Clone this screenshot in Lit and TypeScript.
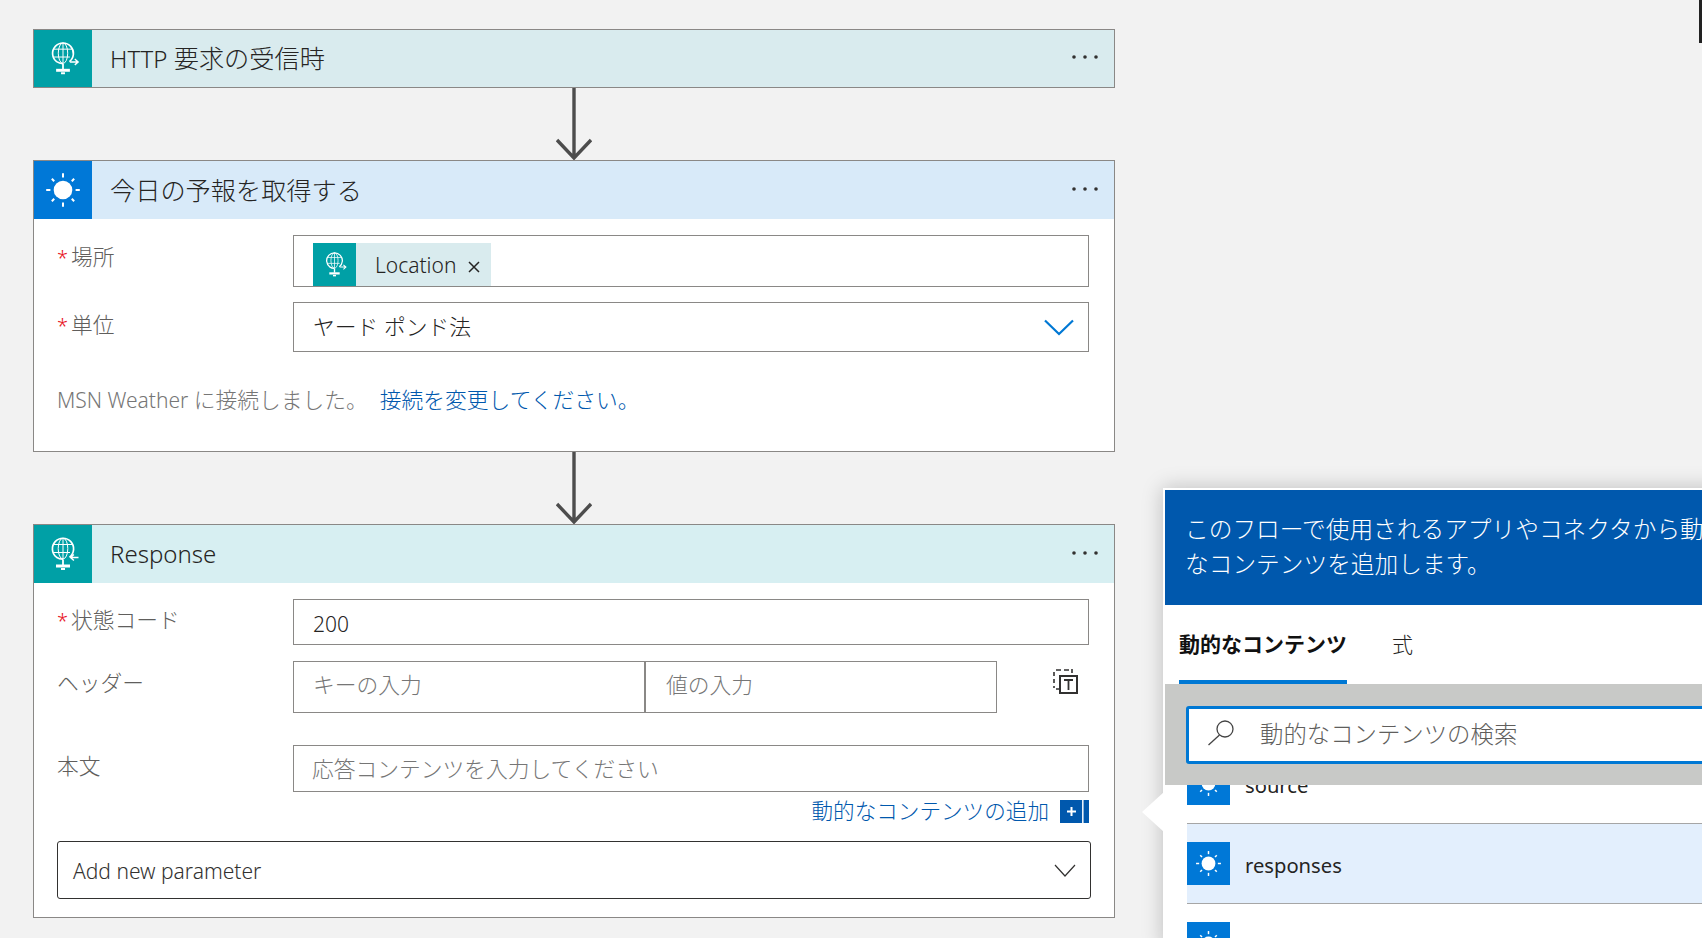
import { LitElement, html, css, svg } from "lit";
import { customElement } from "lit/decorators.js";

const globe = (dir: "out" | "in") => html`<svg viewBox="0 0 58 58" class="ic">
  <g fill="none" stroke="#fff" stroke-width="1">
    <path d="M35.5 32.2A10.6 10.6 0 1 0 22.5 32.2A10.6 10.6 0 0 0 29 34.2" stroke-width="1.7"/>
    <ellipse cx="29" cy="23.6" rx="4.8" ry="10.4"/>
    <path d="M29 13.2V34M19 19.5H39M19 27.5H36"/>
    <path d="M29 34.5V40" stroke-width="1.8"/>
    <path d="${dir === "out" ? "M36 32.5H44M41 29.5L44.4 32.5L41 35.5" : "M36.5 32.5H44.5M39.9 29.5L36.5 32.5L39.9 35.5"}" stroke-width="1.4"/>
  </g>
  <rect x="22" y="39.5" width="14" height="3" fill="#fff"/>
  <rect x="27" y="43" width="4" height="2" fill="#fff"/>
</svg>`;

const sun = () => html`<svg viewBox="0 0 58 58" class="ic">
  <circle cx="29" cy="29" r="9.3" fill="#fff"/>
  <g stroke="#fff" stroke-width="2" fill="none">
    ${[0, 45, 90, 135, 180, 225, 270, 315].map(
      (a) => svg`<path d="${a % 90 === 0 ? "M29 12.2V16.4" : "M29 13.2V16.6"}" transform="rotate(${a} 29 29)"/>`
    )}
  </g>
</svg>`;

const dots = () => html`<svg class="dots" width="26" height="6" viewBox="0 0 26 6">
  <circle cx="2" cy="3" r="1.8"/><circle cx="13" cy="3" r="1.8"/><circle cx="24" cy="3" r="1.8"/>
</svg>`;

const flowArrow = () => html`<div class="arrow"><svg width="36" height="72" viewBox="0 0 36 72" fill="none" stroke="#4d4d4d" stroke-width="3.4"><path d="M18 0V69M1 52L18 70L35 52"/></svg></div>`;

@customElement("app-root")
export class AppRoot extends LitElement {
  static styles = css`
    :host {
      display: block;
      position: relative;
      width: 1702px;
      height: 938px;
      overflow: hidden;
      background: #f2f2f2;
      font-family: "Noto Sans", "Noto Sans CJK JP", sans-serif;
      font-size: 21px;
      font-weight: 300;
      color: #252423;
      box-sizing: border-box;
      padding: 29px 0 0 33px;
    }
    * { box-sizing: border-box; }
    .ja { font-size: 21.75px; }
    .flow { width: 1082px; display: flex; flex-direction: column; }
    .card { border: 1px solid #8a8886; background: #fff; }
    .hdr { height: 58px; display: flex; align-items: center; padding-right: 16px; }
    .hdr.t1 { background: #d9ebee; height: 57px; }
    .hdr.t2 { background: #d8eaf9; }
    .hdr.t3 { background: #d7eff2; }
    .icbox { width: 58px; height: 100%; flex: none; display: flex; }
    .teal { background: #00a0a6; }
    .blue { background: #0078d7; }
    .ic { width: 100%; height: 100%; display: block; }
    .title { flex: 1; margin-left: 18px; font-size: 24px; line-height: 34px; }
    .title .tj { font-size: 25.2px; }
    .dots { fill: #323130; margin-top: -3px; }
    .arrow { height: 72px; display: flex; justify-content: center; }
    .arrow svg { display: block; margin-left: -1px; }
    .body { padding: 16px 25px 0 23px; }
    .row { display: grid; grid-template-columns: 236px 796px; }
    .lab { color: #605e5c; line-height: 28px; font-size: 21.75px; padding-top: 7px; white-space: nowrap; }
    .lab.down { padding-top: 8px; }
    .req::before { content: "*"; color: #e81123; font-size: 20px; margin-right: 3px; }
    .lab.lower { padding-top: 24px; }
    .field { border: 1px solid #8a8886; background: #fff; display: flex; align-items: center; padding-left: 19px; white-space: nowrap; font-size: 21px; }
    .ph { color: #767676; font-size: 21.75px; }
    .chip { height: 43px; margin-top: 7px; background: #d9ebee; display: flex; align-items: center; width: 178px; }
    .chip .icbox { width: 43px; }
    .chip span { margin-left: 19px; flex: 1; }
    .chip svg.x { margin: 5px 11px 0 0; }
    .chipfield { height: 52px; align-items: flex-start; }
    .sel { justify-content: space-between; height: 50px; margin-top: 15px; padding-right: 14px; font-size: 21.75px; }
    .sel span { padding-bottom: 3px; }
    .note { margin-top: 31px; height: 35px; line-height: 33px; color: #767676; display: flex; white-space: nowrap; }
    .note a { color: #0058ad; margin-left: 12px; font-size: 21.75px; }
    .spacer2 { height: 33px; }
    .f200 { height: 46px; padding-top: 3px; }
    .pair { display: flex; height: 52px; align-items: stretch; }
    .pair .field { width: 352px; flex: none; padding-left: 19px; padding-bottom: 8px; }
    .pair .field + .field { border-left: 1px solid #8a8886; padding-left: 20px; }
    .clip { margin: 8px 0 0 56px; flex: none; display: block; }
    .r2 { margin-top: 16px; }
    .r3 { margin-top: 32px; }
    .f3 { height: 47px; padding-left: 18px; padding-bottom: 2px; }
    .add { display: flex; justify-content: flex-end; align-items: center; height: 23px; margin-top: 8px; color: #0058ad; white-space: nowrap; line-height: 21px; font-size: 21.6px; }
    .add span { padding-bottom: 2px; }
    .plus { width: 29px; height: 23px; margin-left: 11px; display: block; }
    .param { margin: 18px -2px 18px 0; height: 58px; border: 1px solid #323130; border-radius: 3px; display: flex; align-items: center; justify-content: space-between; padding: 0 14px 0 15px; color: #323130; }
    .param span { padding-top: 2px; }
    .panel {
      position: absolute; left: 1163px; top: 488px; width: 620px; height: 460px;
      background: #fff; padding: 2px 0 0 2px;
      box-shadow: 0 0 20px rgba(0,0,0,.22);
    }
    .beak { position: absolute; left: -21px; top: 304px; display: block; }
    .banner { background: #0058ad; color: #fff; height: 115px; padding: 22px 20px 0 20px; font-size: 23.7px; line-height: 35px; white-space: nowrap; overflow: hidden; }
    .tabs { height: 79px; display: flex; padding: 0 0 0 14px; align-items: flex-start; }
    .tab { height: 79px; line-height: 79px; font-size: 21px; }
    .tab.on { font-weight: 700; color: #111; border-bottom: 4px solid #0078d4; width: 168px; white-space: nowrap; }
    .tab.off { margin-left: 45px; }
    .searchwrap { position: relative; z-index: 1; background: #c8c9c7; height: 101px; padding: 22px 0 0 21px; }
    .search { height: 58px; width: 640px; border: 3px solid #0078d4; border-radius: 3px; background: #fff; display: flex; align-items: center; color: #605e5c; font-size: 23.4px; padding: 0 0 5px 18px; }
    .search svg { margin-right: 25px; flex: none; }
    .list { margin: -41px 0 0 22px; width: 620px; }
    .item { height: 80px; display: flex; border-bottom: 1px solid #a6a6a6; padding-top: 18px; font-weight: 400; }
    .item.hl { background: #e3effd; }
    .item .icbox { width: 43px; height: 43px; }
    .item span { margin-left: 15px; line-height: 46px; color: #252423; font-size: 20.2px; }
    .corner { position: absolute; right: 0; top: 0; width: 3px; height: 43px; background: #222; }
  `;

  render() {
    return html`
      <div class="flow">
        <section class="card">
          <div class="hdr t1"><div class="icbox teal">${globe("out")}</div><div class="title">HTTP <span class="tj">要求の受信時</span></div>${dots()}</div>
        </section>
        ${flowArrow()}
        <section class="card">
          <div class="hdr t2"><div class="icbox blue">${sun()}</div><div class="title"><span class="tj">今日の予報を取得する</span></div>${dots()}</div>
          <div class="body">
            <div class="row">
              <div class="lab req down">場所</div>
              <div class="field chipfield"><div class="chip"><div class="icbox teal">${globe("out")}</div><span>Location</span>
                <svg class="x" width="12" height="12" viewBox="0 0 12 12" stroke="#252423" stroke-width="1.5"><path d="M1 1L11 11M11 1L1 11"/></svg></div></div>
            </div>
            <div class="row">
              <div class="lab req lower">単位</div>
              <div class="field sel"><span>ヤード ポンド法</span>
                <svg width="30" height="17" viewBox="0 0 30 17" fill="none" stroke="#0078d4" stroke-width="2.2"><path d="M1 1.5L15 15L29 1.5"/></svg></div>
            </div>
            <div class="note"><span>MSN Weather <span class="ja">に接続しました。</span></span><a>接続を変更してください。</a></div>
            <div class="spacer2"></div>
          </div>
        </section>
        ${flowArrow()}
        <section class="card">
          <div class="hdr t3"><div class="icbox teal">${globe("in")}</div><div class="title">Response</div>${dots()}</div>
          <div class="body">
            <div class="row"><div class="lab req">状態コード</div><div class="field f200">200</div></div>
            <div class="row r2">
              <div class="lab down">ヘッダー</div>
              <div class="pair">
                <div class="field ph">キーの入力</div><div class="field ph">値の入力</div>
                <svg class="clip" width="26" height="26" viewBox="0 0 26 26" fill="none" stroke="#323130">
                  <path d="M1 10V14M1 17V19M3 1H8M11 1H16M1 3V7M3 20H7M19 0V4" stroke-width="1.6"/>
                  <rect x="7" y="7" width="17" height="17" stroke-width="2"/>
                  <path d="M11 11H20M15.5 11V21" stroke-width="1.8"/>
                </svg>
              </div>
            </div>
            <div class="row r3"><div class="lab">本文</div><div class="field f3 ph">応答コンテンツを入力してください</div></div>
            <div class="add"><span>動的なコンテンツの追加</span>
              <svg class="plus" viewBox="0 0 29 23"><rect width="29" height="23" fill="#0058ad"/><rect x="22" width="1.6" height="23" fill="#e8f1fa"/><path d="M7 11.5H16M11.5 7V16" stroke="#fff" stroke-width="2"/></svg>
            </div>
            <div class="param"><span>Add new parameter</span>
              <svg width="22" height="13" viewBox="0 0 22 13" fill="none" stroke="#323130" stroke-width="1.2"><path d="M1 1L11 12L21 1"/></svg></div>
          </div>
        </section>
      </div>

      <aside class="panel">
        <svg class="beak" width="22" height="40" viewBox="0 0 22 40"><path d="M22 0L0 20L22 40Z" fill="#fff"/></svg>
        <div class="banner">このフローで使用されるアプリやコネクタから動的<br>なコンテンツを追加します。</div>
        <div class="tabs"><div class="tab on">動的なコンテンツ</div><div class="tab off">式</div></div>
        <div class="searchwrap">
          <div class="search">
            <svg width="28" height="26" viewBox="0 0 28 26" fill="none" stroke="#444" stroke-width="1.3"><circle cx="18" cy="9" r="8"/><path d="M12.5 15L1.5 25"/></svg>
            動的なコンテンツの検索
          </div>
        </div>
        <div class="list">
          <div class="item"><div class="icbox blue">${sun()}</div><span>source</span></div>
          <div class="item hl"><div class="icbox blue">${sun()}</div><span>responses</span></div>
          <div class="item"><div class="icbox blue">${sun()}</div><span>status</span></div>
        </div>
      </aside>
      <div class="corner"></div>
    `;
  }
}
